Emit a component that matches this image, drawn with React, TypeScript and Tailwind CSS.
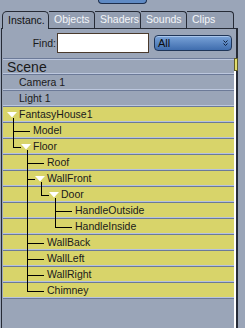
type TreeItem = { label: string; level: number; open?: boolean }

const tree: TreeItem[] = [
  { label: 'FantasyHouse1', level: 0, open: true },
  { label: 'Model', level: 1 },
  { label: 'Floor', level: 1, open: true },
  { label: 'Roof', level: 2 },
  { label: 'WallFront', level: 2, open: true },
  { label: 'Door', level: 3, open: true },
  { label: 'HandleOutside', level: 4 },
  { label: 'HandleInside', level: 4 },
  { label: 'WallBack', level: 2 },
  { label: 'WallLeft', level: 2 },
  { label: 'WallRight', level: 2 },
  { label: 'Chimney', level: 2 },
]

const tabs = ['Objects', 'Shaders', 'Sounds', 'Clips']

// connector lines for the tree, in px relative to the yellow block
function treeLines() {
  const segs: { x1: number; y1: number; x2: number; y2: number }[] = []
  tree.forEach((item, i) => {
    if (!item.open) return
    const L = item.level
    const kids: number[] = []
    for (let k = i + 1; k < tree.length; k++) {
      if (tree[k].level <= L) break
      if (tree[k].level === L + 1) kids.push(k)
    }
    if (!kids.length) return
    const x = 10.5 + 14 * L
    const last = kids[kids.length - 1]
    segs.push({ x1: x, y1: 16 * i + 11, x2: x, y2: 16 * last + 9 })
    kids.forEach((k) => {
      const end = tree[k].open ? 18 + 14 * L : 27 + 14 * L
      segs.push({ x1: 10 + 14 * L, y1: 16 * k + 8.5, x2: end, y2: 16 * k + 8.5 })
    })
  })
  return segs
}

function Triangle() {
  return (
    <svg width="10" height="6" className="mt-[5px] self-start">
      <polygon points="0,0 10,0 5,5.5" fill="#ffffff" />
    </svg>
  )
}

function GrayRow({ label, big }: { label: string; big?: boolean }) {
  return (
    <div
      className={`flex items-center border-b border-[#6c7a98] shadow-[inset_0_-1px_0_#bcc7de] ${
        big ? 'h-[15px] pl-[4px] text-[14px]' : 'h-[16px] pl-[16px] text-[10.5px]'
      }`}
    >
      <span className="leading-none">{label}</span>
    </div>
  )
}

export default function App() {
  const lines = treeLines()

  return (
    <div className="flex h-[328px] w-[245px] flex-col overflow-hidden bg-[#9aa5b8] font-['Liberation_Sans',Arial,sans-serif] text-[#1a1a1a]">
      {/* top button (cut off) */}
      <div className="h-[11px] shrink-0">
        <div className="ml-[98px] h-[4px] w-[49px] rounded-b-[5px] border border-t-0 border-[#1d2e4c] bg-[#5f8ac4]" />
      </div>

      {/* tabs */}
      <div className="ml-[2px] flex h-[17px] shrink-0 items-stretch text-[10.5px]">
        <div className="relative z-10 -mb-px flex w-[47px] items-center rounded-t-[5px] border border-b-0 border-[#262b36] bg-[#9aa5b8] pl-[5px] text-[#111]">
          Instanc.
        </div>
        {tabs.map((t, i) => (
          <div
            key={t}
            className={`flex items-center rounded-tr-[4px] border-t border-r border-[#262b36] bg-[#939eb1] pl-[5px] text-[#f4f6fa] ${
              i === 3 ? 'w-[47px]' : 'w-[46px]'
            }`}
          >
            {t}
          </div>
        ))}
      </div>

      {/* panel */}
      <div className="ml-[1px] flex w-[237px] flex-1 flex-col border-t border-l border-r-2 border-[#262b36]">
        {/* find row */}
        <div className="flex h-[29px] shrink-0 items-start pt-[4px] text-[10.5px]">
          <span className="h-[20px] w-[54px] text-right leading-[20px]">Find:</span>
          <div className="ml-[1px] h-[20px] w-[92px] border border-[#4a3a2c] bg-white" />
          <div className="mt-[2px] ml-[5px] flex h-[16px] w-[78px] items-center justify-between rounded-[4px] border border-[#1f3558] bg-gradient-to-b from-[#7aa3d8] to-[#3f6dae] pr-[3px] pl-[3px] shadow-[inset_0_1px_0_#a9c6ec]">
            <span className="text-[11px] leading-none text-[#0d0d0d]">All</span>
            <svg width="5" height="7" viewBox="0 0 5 7">
              <polyline points="0.5,0.5 2.5,2.5 4.5,0.5" fill="none" stroke="#10203a" strokeWidth="1" />
              <polyline points="0.5,3.5 2.5,5.5 4.5,3.5" fill="none" stroke="#10203a" strokeWidth="1" />
            </svg>
          </div>
        </div>

        {/* list + scrollbar */}
        <div className="flex flex-1">
          <div className="w-[232px] pl-[1px]">
            <div className="h-[2px] border-b border-[#bcc7de] bg-[#6c7a98]" />
            <GrayRow label="Scene" big />
            <GrayRow label="Camera 1" />
            <GrayRow label="Light 1" />

            <div className="relative">
              {tree.map((item) => (
                <div
                  key={item.label}
                  className="flex h-[16px] border-b border-[#6c7a98] bg-[#d8d46a] text-[10.5px] shadow-[inset_0_-1px_0_#b6c2df]"
                  style={{ paddingLeft: 4 + 14 * item.level }}
                >
                  <div className="w-[12px] shrink-0">{item.open && <Triangle />}</div>
                  <span className="self-center leading-none">{item.label}</span>
                </div>
              ))}
              <svg className="pointer-events-none absolute inset-0" width="231" height={tree.length * 16}>
                {lines.map((s, i) => (
                  <line key={i} x1={s.x1} y1={s.y1} x2={s.x2} y2={s.y2} stroke="#000" strokeWidth="1" />
                ))}
              </svg>
            </div>
          </div>

          <div className="relative w-[2px] bg-white">
            <div className="absolute top-0 left-0 h-[13px] w-[4px] border border-[#5e5b26] bg-[#e2de6e]" />
          </div>
        </div>
      </div>
    </div>
  )
}
